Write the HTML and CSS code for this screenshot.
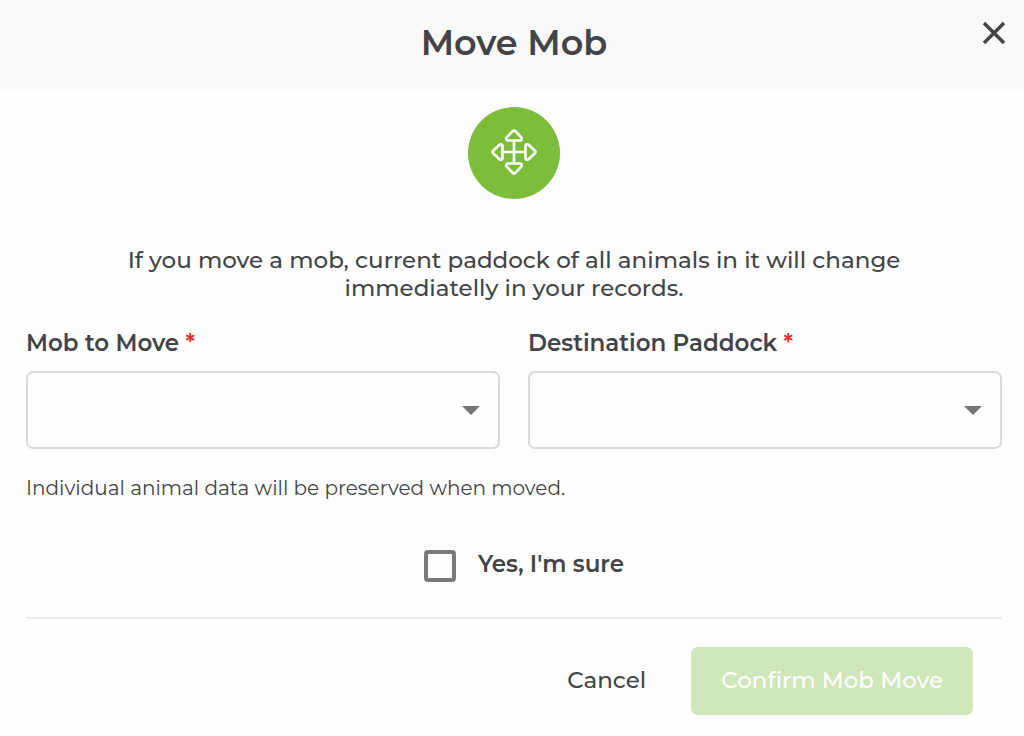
FILE: index.html
```html
<!DOCTYPE html>
<html lang="en">
<head>
<meta charset="utf-8">
<meta name="viewport" content="width=device-width, initial-scale=1">
<title>Move Mob</title>
<link rel="stylesheet" href="styles.css">
</head>
<body>
<main class="dialog" role="dialog" aria-labelledby="dialog-title">
  <header class="dialog-header">
    <h1 class="dialog-title" id="dialog-title">Move Mob</h1>
    <button class="close-button" type="button" aria-label="Close">
      <svg class="close-icon" viewBox="0 0 24 24" aria-hidden="true"><path d="M2 2 22 22M22 2 2 22"/></svg>
    </button>
  </header>
  <form class="dialog-body">
    <div class="badge">
      <svg class="move-icon" viewBox="0 0 48 48" aria-hidden="true">
        <path d="M24 12V36M12 24H36"/>
        <path d="M22.6 2.2Q24 1 25.4 2.2L31.6 8.8Q33 11.6 30.4 12H17.6Q15 11.6 16.4 8.8Z"/>
        <path d="M22.6 45.8Q24 47 25.4 45.8L31.6 39.2Q33 36.4 30.4 36H17.6Q15 36.4 16.4 39.2Z"/>
        <path d="M2.2 22.6Q1 24 2.2 25.4L8.8 31.6Q11.6 33 12 30.4V17.6Q11.6 15 8.8 16.4Z"/>
        <path d="M45.8 22.6Q47 24 45.8 25.4L39.2 31.6Q36.4 33 36 30.4V17.6Q36.4 15 39.2 16.4Z"/>
      </svg>
    </div>
    <p class="message">If you move a mob, current paddock of all animals in it will change immediatelly in your records.</p>
    <div class="fields">
      <div class="field">
        <label class="field-label" for="mob">Mob to Move <span class="required">*</span></label>
        <div class="select-box">
          <select class="select" id="mob" required><option value=""></option></select>
          <svg class="arrow" viewBox="0 0 18 9" aria-hidden="true"><path d="M0 0H18L9 9Z"/></svg>
        </div>
      </div>
      <div class="field">
        <label class="field-label" for="paddock">Destination Paddock <span class="required">*</span></label>
        <div class="select-box">
          <select class="select" id="paddock" required><option value=""></option></select>
          <svg class="arrow" viewBox="0 0 18 9" aria-hidden="true"><path d="M0 0H18L9 9Z"/></svg>
        </div>
      </div>
    </div>
    <p class="note">Individual animal data will be preserved when moved.</p>
    <div class="confirm">
      <input class="checkbox" id="sure" type="checkbox">
      <label class="confirm-label" for="sure">Yes, I'm sure</label>
    </div>
    <footer class="actions">
      <button class="button button-text" type="button">Cancel</button>
      <button class="button button-primary" type="submit" disabled>Confirm Mob Move</button>
    </footer>
  </form>
</main>
</body>
</html>
```

FILE: styles.css
```css
* { box-sizing: border-box; }

body {
  margin: 0;
  background: #fefefe;
  color: #434445;
  font-family: Montserrat, Inter, "Open Sans", sans-serif;
  font-weight: 500;
}

.dialog-header {
  position: relative;
  display: flex;
  justify-content: center;
  padding: 19px 22px 22px 26px;
  background: #f9f9f9;
}

.dialog-title {
  margin: 0;
  font-size: 35px;
  line-height: 48px;
  font-weight: 600;
}

.close-button {
  position: absolute;
  top: 15px;
  right: 12px;
  display: flex;
  padding: 6px;
  border: 0;
  background: none;
  color: #434445;
}

.close-icon {
  width: 24px;
  height: 24px;
  fill: none;
  stroke: currentColor;
  stroke-width: 3.4;
}

.dialog-body { padding: 18px 22px 0 26px; }

.badge {
  display: flex;
  align-items: center;
  justify-content: center;
  width: 92px;
  height: 92px;
  margin: 0 auto;
  padding-bottom: 2px;
  border-radius: 50%;
  background: #7cbd3a;
}

.move-icon {
  width: 46px;
  height: 46px;
  fill: none;
  stroke: #fff;
  stroke-width: 2.8;
  stroke-linejoin: round;
  overflow: visible;
}

.message {
  max-width: 800px;
  margin: 47px auto 0;
  font-size: 23px;
  line-height: 28px;
  text-align: center;
}

.fields {
  display: grid;
  grid-template-columns: 1fr 1fr;
  gap: 28px;
  margin-top: 27px;
}

.field-label {
  display: block;
  font-size: 23px;
  line-height: 28px;
  font-weight: 600;
}

.required { color: #d93025; }

.select-box {
  position: relative;
  margin-top: 14px;
}

.select {
  display: block;
  width: 100%;
  height: 78px;
  padding: 0 48px 0 20px;
  appearance: none;
  border: 2px solid #dadada;
  border-radius: 7px;
  background: #fefefe;
  color: inherit;
  font: inherit;
  font-size: 23px;
}

.arrow {
  position: absolute;
  top: 35px;
  right: 20px;
  width: 18px;
  height: 9px;
  fill: #757575;
  pointer-events: none;
}

.note {
  margin: 27px 0 0;
  font-size: 20px;
  line-height: 24px;
  font-weight: 400;
}

.confirm {
  display: flex;
  align-items: flex-start;
  justify-content: center;
  gap: 22px;
  margin: 50px 0 35px;
  padding-left: 20px;
}

.checkbox {
  width: 32px;
  height: 32px;
  margin: 0;
  appearance: none;
  border: 4px solid #7a7a7a;
  border-radius: 4px;
}

.checkbox:checked { background: #7cbd3a; }

.confirm-label {
  font-size: 23px;
  line-height: 28px;
  font-weight: 600;
}

.actions {
  display: flex;
  align-items: center;
  justify-content: flex-end;
  gap: 15px;
  padding: 28px 29px 20px 0;
  border-top: 2px solid #ededed;
}

.button {
  padding: 19px 30px 21px;
  border: 0;
  border-radius: 7px;
  font: inherit;
  font-size: 23px;
  line-height: 28px;
}

.button-text {
  background: none;
  color: #434445;
}

.button-primary {
  background: #d0e7b9;
  color: #fff;
}
```
